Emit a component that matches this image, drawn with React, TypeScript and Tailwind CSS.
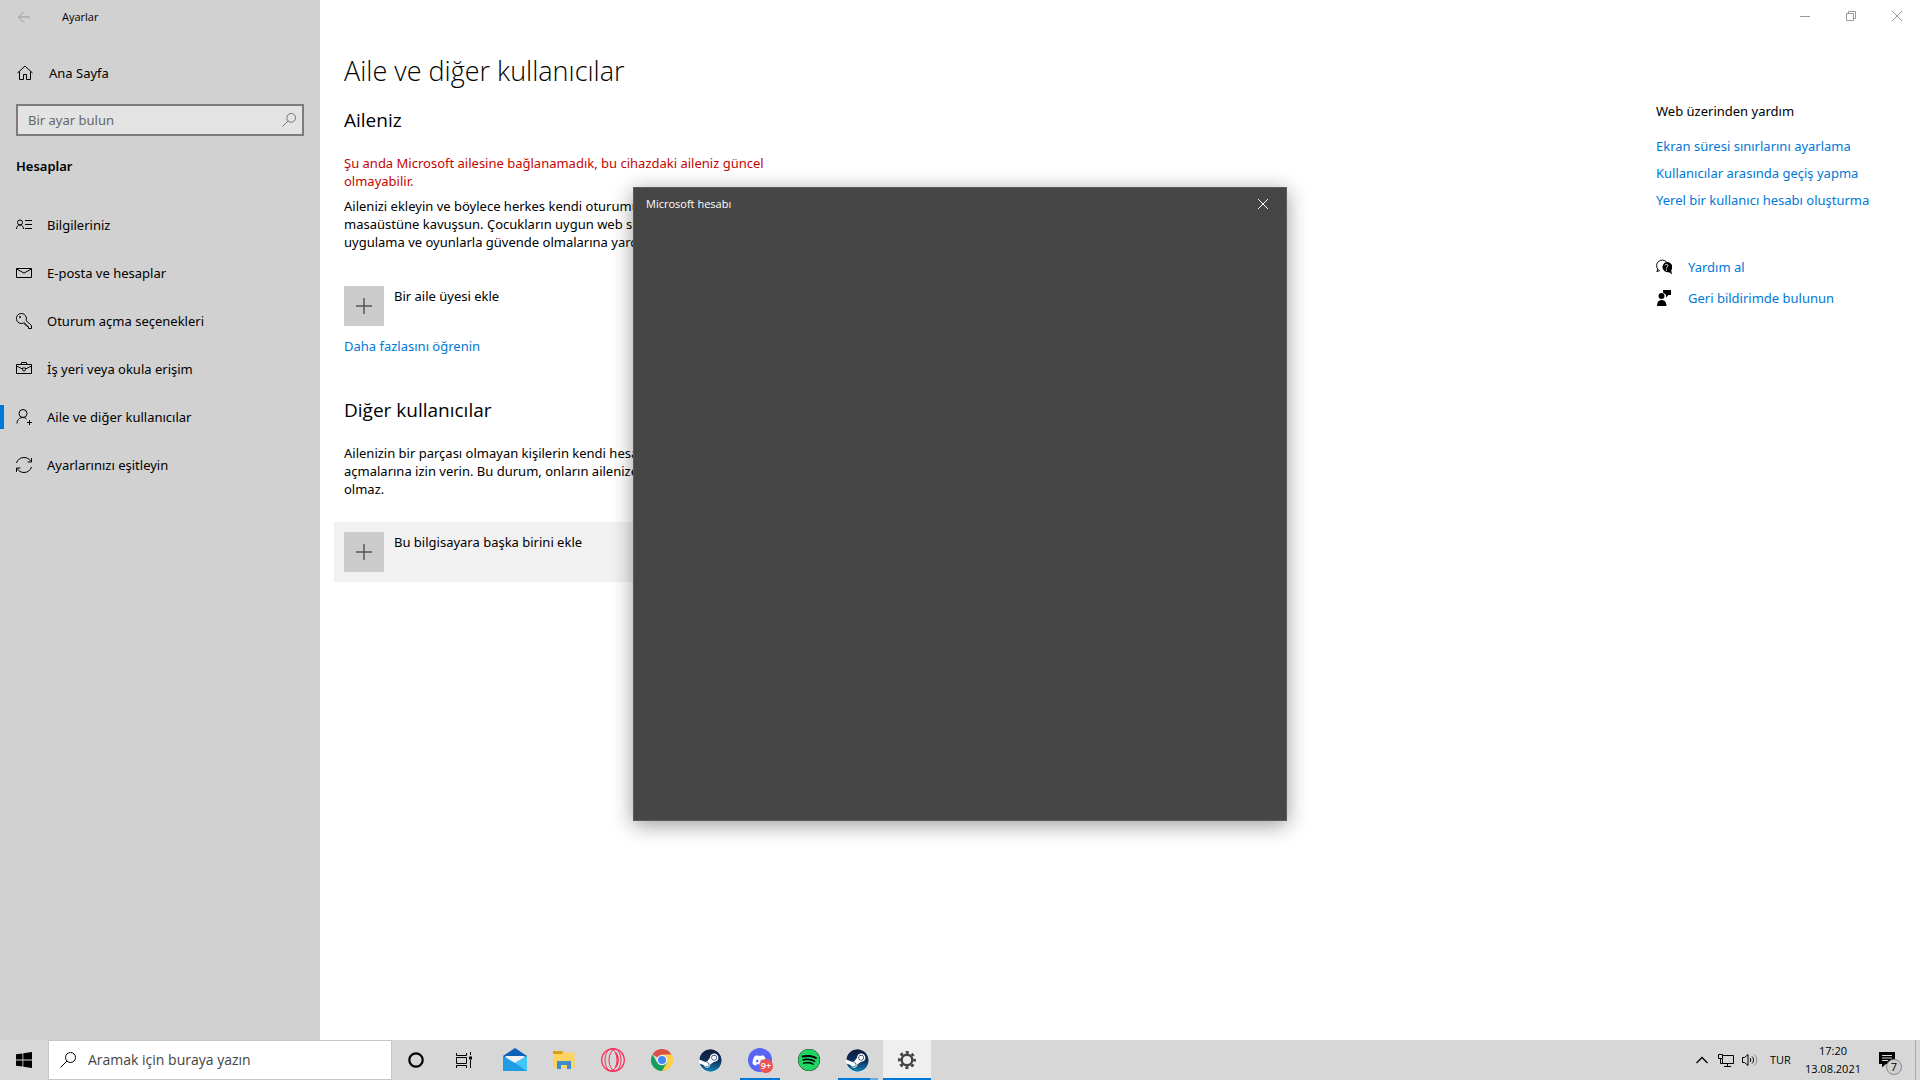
import type { ReactNode } from 'react';
import { FaDiscord, FaSpotify, FaSteam } from 'react-icons/fa';

const line = {
  width: 16,
  height: 16,
  viewBox: '0 0 16 16',
  fill: 'none',
  stroke: 'currentColor',
  strokeWidth: 1,
};

const navItems = [
  {
    label: 'Bilgileriniz',
    icon: (
      <svg {...line}>
        <circle cx="4" cy="5.500" r="2.500" />
        <path d="M.5 12c0-2.500 1.500-4 3.500-4s3.500 1.500 3.500 4M9 3.500h7M9 7.500h7M9 11.500h7" />
      </svg>
    ),
  },
  {
    label: 'E-posta ve hesaplar',
    icon: (
      <svg {...line}>
        <path d="M.5 3.500h15v9H.5zM.5 4l7.500 4 7.500-4" />
      </svg>
    ),
  },
  {
    label: 'Oturum açma seçenekleri',
    icon: (
      <svg {...line}>
        <path d="M5.500.5a5 5 0 1 0 2 9.500h1.500v2h2v1.500h1.500v2h3v-3L10 7.500A5 5 0 0 0 5.500.5z" />
        <circle cx="4" cy="4" r=".6" fill="currentColor" />
      </svg>
    ),
  },
  {
    label: 'İş yeri veya okula erişim',
    icon: (
      <svg {...line}>
        <path d="M.5 3.500h15v9H.5zM5.500 3.500v-2h5v2M.5 5l6 3M9.500 8l6-3" />
        <path d="M6.500 7h3v1.500a1.500 1.500 0 0 1-3 0z" />
      </svg>
    ),
  },
  {
    label: 'Aile ve diğer kullanıcılar',
    active: true,
    icon: (
      <svg {...line}>
        <circle cx="7" cy="4.500" r="4" />
        <path d="M1 14.500c0-3.500 2.500-6 6-6 1.500 0 2.500.5 3.500 1.500M13.500 11v5M11 13.500h5" />
      </svg>
    ),
  },
  {
    label: 'Ayarlarınızı eşitleyin',
    icon: (
      <svg {...line}>
        <path d="M.5 6C1.500 2.500 4.500.5 8 .5c3 0 5.500 1.500 7 4M15.500 1v4H11.500M15.500 10c-1 3.500-4 5.500-7.500 5.500-3 0-5.500-1.500-7-4M.5 15v-4h4" />
      </svg>
    ),
  },
];

const helpLinks = [
  'Ekran süresi sınırlarını ayarlama',
  'Kullanıcılar arasında geçiş yapma',
  'Yerel bir kullanıcı hesabı oluşturma',
];

function SearchIcon({ className }: { className: string }) {
  return (
    <svg viewBox="0 0 16 16" fill="none" stroke="currentColor" className={className}>
      <circle cx="10.500" cy="5.500" r="5" />
      <path d="M7 9 .5 15.500" />
    </svg>
  );
}

function CloseIcon() {
  return (
    <svg width="10" height="10" viewBox="0 0 10 10" fill="none" stroke="currentColor">
      <path d="m0 0 10 10M10 0 0 10" />
    </svg>
  );
}

function Sidebar() {
  return (
    <aside className="w-80 shrink-0 bg-[#d1d1d1]">
      <div className="flex h-[33px] items-center gap-8 pl-[18px]">
        <button aria-label="Geri" className="text-[#999]">
          <svg width="12" height="12" viewBox="0 0 12 12" fill="none" stroke="currentColor">
            <path d="M12 6H.5M6 .5.5 6 6 11.500" />
          </svg>
        </button>
        <span className="font-['Open_Sans',sans-serif] text-[11px]">Ayarlar</span>
      </div>
      <a href="#" className="mt-5 flex h-10 items-center gap-4 pl-[17px]">
        <svg {...line}>
          <path d="M.5 8 8 1l7.500 7M2.500 6.500v8h4v-5h3v5h4v-8" />
        </svg>
        Ana Sayfa
      </a>
      <div className="mx-4 mt-[11px] flex h-8 items-center border-2 border-[#7d7d7d] bg-[#e3e3e3] pr-1.5 pl-2.5">
        <input
          aria-label="Bir ayar bulun"
          placeholder="Bir ayar bulun"
          className="min-w-0 flex-1 bg-transparent outline-none placeholder:text-[#666]"
        />
        <SearchIcon className="size-3.5 text-[#666]" />
      </div>
      <h2 className="mt-5 pl-4 leading-5 font-semibold">Hesaplar</h2>
      <nav className="mt-[25px]">
        {navItems.map((item) => (
          <a key={item.label} href="#" className="relative flex h-12 items-center gap-[15px] pl-4">
            {item.active && <span className="absolute left-0 h-6 w-1 bg-[#0078d7]" />}
            {item.icon}
            {item.label}
          </a>
        ))}
      </nav>
    </aside>
  );
}

function AddTile() {
  return (
    <span className="flex size-10 items-center justify-center bg-[#ccc] text-[#555]">
      <svg width="16" height="16" viewBox="0 0 16 16" stroke="currentColor" strokeWidth="1.500">
        <path d="M8 0v16M0 8h16" />
      </svg>
    </span>
  );
}

function Content() {
  return (
    <main className="w-[480px] pt-[49px] pl-6">
      <h1 className="font-['Open_Sans',sans-serif] text-[27px] leading-11 font-light">Aile ve diğer kullanıcılar</h1>
      <h2 className="mt-[13px] font-['Open_Sans',sans-serif] text-[19px] leading-7">Aileniz</h2>
      <p className="mt-5 leading-[18px] whitespace-nowrap text-[#c50500]">
        Şu anda Microsoft ailesine bağlanamadık, bu cihazdaki aileniz güncel
        <br />
        olmayabilir.
      </p>
      <p className="mt-[7px] leading-[18px]">
        Ailenizi ekleyin ve böylece herkes kendi oturumu
        <br />
        masaüstüne kavuşsun. Çocukların uygun web siteleri
        <br />
        uygulama ve oyunlarla güvende olmalarına yardımcı
      </p>
      <button className="mt-[35px] flex gap-2.5 text-left">
        <AddTile />
        Bir aile üyesi ekle
      </button>
      <a href="#" className="mt-2.5 block leading-5 text-[#0078d7]">
        Daha fazlasını öğrenin
      </a>
      <h2 className="mt-10 font-['Open_Sans',sans-serif] text-[19px] leading-7">Diğer kullanıcılar</h2>
      <p className="mt-5 leading-[18px]">
        Ailenizin bir parçası olmayan kişilerin kendi hesap
        <br />
        açmalarına izin verin. Bu durum, onların ailenize
        <br />
        olmaz.
      </p>
      <button className="mt-6 -ml-2.5 flex w-full gap-2.5 bg-[#f1f1f1] p-2.5 text-left">
        <AddTile />
        Bu bilgisayara başka birini ekle
      </button>
    </main>
  );
}

function HelpPanel() {
  return (
    <aside className="ml-auto w-66 pt-[101px]">
      <h3 className="leading-5">Web üzerinden yardım</h3>
      <ul className="mt-3 text-[#0078d7]">
        {helpLinks.map((text) => (
          <li key={text} className="leading-[27px]">
            <a href="#">{text}</a>
          </li>
        ))}
      </ul>
      <div className="mt-[37px] text-[#0078d7]">
        <a href="#" className="flex h-[31px] items-center gap-4">
          <svg width="16" height="16" viewBox="0 0 16 16" className="text-black">
            <path d="M2 10.500A5 5 0 1 1 10.500 3M2 10 .8 12.500 4 11.500" fill="none" stroke="currentColor" />
            <path d="M10.500 3a5.200 5.200 0 1 0 2.500 10.200l3 2-.8-3.700A5.200 5.200 0 0 0 10.500 3z" fill="currentColor" />
            <path d="M9 6.500c.2-1.700 3-1.500 2.800.2C11.700 8 10.400 7.800 10.400 9.500M10.400 10.500v1.300" fill="none" stroke="#fff" />
          </svg>
          Yardım al
        </a>
        <a href="#" className="flex h-[31px] items-center gap-4">
          <svg width="16" height="16" viewBox="0 0 16 16" fill="currentColor" className="text-black">
            <circle cx="5.500" cy="6" r="3" />
            <path d="M1 16c0-4 1.500-6 4.500-6s5 2 5 6zM7 0h8v5h-2.500L10 7.500V5L9 4 7 2.500z" />
          </svg>
          Geri bildirimde bulunun
        </a>
      </div>
    </aside>
  );
}

function WindowButtons() {
  return (
    <div className="absolute top-0 right-0 flex text-[#999]">
      <button aria-label="Küçült" className="flex h-8 w-[46px] items-center justify-center">
        <svg width="10" height="10" viewBox="0 0 10 10" stroke="currentColor">
          <path d="M0 5.500h10" />
        </svg>
      </button>
      <button aria-label="Geri yükle" className="flex h-8 w-[46px] items-center justify-center">
        <svg width="10" height="10" viewBox="0 0 10 10" fill="none" stroke="currentColor">
          <path d="M.5 2.500h7v7h-7zM2.500 2.500v-2h7v7h-2" />
        </svg>
      </button>
      <button aria-label="Kapat" className="flex h-8 w-[46px] items-center justify-center">
        <CloseIcon />
      </button>
    </div>
  );
}

function AccountDialog() {
  return (
    <div
      role="dialog"
      aria-label="Microsoft hesabı"
      className="absolute top-[187px] left-1/2 h-[634px] w-[654px] -translate-x-1/2 border border-[#5c5c5c] bg-[#464646] text-white shadow-[0_4px_20px_rgba(0,0,0,0.4)]"
    >
      <div className="flex h-8 items-center justify-between pl-3">
        <span className="font-['Open_Sans',sans-serif] text-[11px]">Microsoft hesabı</span>
        <button aria-label="Kapat" className="flex h-8 w-[46px] items-center justify-center">
          <CloseIcon />
        </button>
      </div>
    </div>
  );
}

function SteamIcon() {
  return (
    <span className="rounded-full bg-white">
      <svg width="0" height="0" className="absolute">
        <linearGradient id="steam" x1="0" y1="0" x2="0" y2="1">
          <stop offset="0" stopColor="#121a3c" />
          <stop offset="0.500" stopColor="#0f2f5c" />
          <stop offset="1" stopColor="#1583b5" />
        </linearGradient>
      </svg>
      <FaSteam size={23} fill="url(#steam)" />
    </span>
  );
}

function TaskButton({ label, children }: { label: string; children: ReactNode }) {
  return (
    <button aria-label={label} className="relative flex h-10 w-[49px] items-center justify-center">
      {children}
    </button>
  );
}

function Taskbar() {
  return (
    <footer className="flex h-10 bg-[#d7d7d7] font-['Open_Sans',sans-serif]">
      <button aria-label="Başlat" className="flex w-12 items-center justify-center">
        <svg width="16" height="16" viewBox="0 0 16 16">
          <path d="M0 2.300 6.500 1.400v6.200H0zM7.300 1.300 16 0v7.600H7.300zM0 8.400h6.500v6.200L0 13.700zM7.300 8.400H16V16l-8.700-1.300z" />
        </svg>
      </button>
      <label className="flex w-86 items-center gap-3 border border-[#c6c6c6] bg-white pl-[11px]">
        <SearchIcon className="size-4 text-black" />
        <input
          aria-label="Aramak için buraya yazın"
          placeholder="Aramak için buraya yazın"
          className="min-w-0 flex-1 text-sm outline-none placeholder:text-[#444]"
        />
      </label>
      <button aria-label="Cortana" className="flex w-12 items-center justify-center">
        <svg width="16" height="16" viewBox="0 0 16 16" fill="none" stroke="#000" strokeWidth="2.200">
          <circle cx="8" cy="8" r="6.700" />
        </svg>
      </button>
      <button aria-label="Görev Görünümü" className="mr-0.5 flex w-12 items-center justify-center">
        <svg width="16" height="16" viewBox="0 0 16 16" fill="none" stroke="#000">
          <path d="M.5 1v2.500h10V1M.5 5.500h10v6H.5zM.5 16v-2.500h10V16M14.500 0v3M14.500 8v8" />
          <path d="M13 4.500h3v3h-3z" fill="#000" stroke="none" />
        </svg>
      </button>
      <TaskButton label="Posta">
        <svg width="24" height="24" viewBox="0 0 24 24">
          <path d="M0 8 12 0l12 8v3H0z" fill="#0b62b8" />
          <path d="M2.500 8h19v6L12 17l-9.500-3z" fill="#f2f2f2" />
          <path d="M0 8l12 7 12-7v15H0z" fill="#1f9ce4" />
          <path d="M24 8 12 15l12 8z" fill="#35b8f1" />
          <path d="M12 15 24 8v15z" fill="#50d0f8" opacity=".6" />
        </svg>
      </TaskButton>
      <TaskButton label="Dosya Gezgini">
        <svg width="22" height="20" viewBox="0 0 22 20">
          <path d="M0 1h9.500l1.500 1.500h10.500V18H0z" fill="#fdd362" />
          <path d="M0 1h9.500v3H0z" fill="#dd9d13" />
          <path d="M4 19v-8h14v8h-4v-4H8v4z" fill="#3f8ccb" />
        </svg>
      </TaskButton>
      <TaskButton label="Opera GX">
        <svg width="24" height="24" viewBox="0 0 24 24" fill="none" stroke="#fa2e5b">
          <circle cx="12" cy="12" r="11.300" strokeWidth="1.300" />
          <ellipse cx="10" cy="12" rx="6" ry="10.800" />
          <ellipse cx="14" cy="12" rx="6" ry="10.800" />
          <path d="M14.500 4.500c3.500 4 3.500 11 0 15" strokeWidth="1.500" />
        </svg>
      </TaskButton>
      <TaskButton label="Chrome">
        <svg width="22" height="22" viewBox="0 0 24 24">
          <path d="M12 12 1.600 6A12 12 0 0 1 22.400 6z" fill="#dd4f43" />
          <path d="M12 6h10.400A12 12 0 0 1 12 24l5.200-9z" fill="#ffcf48" />
          <path d="M1.600 6A12 12 0 0 0 12 24l5.200-9H12L6.800 15z" fill="#169d5b" />
          <circle cx="12" cy="12" r="5.800" fill="#f1f1f1" />
          <circle cx="12" cy="12" r="4.400" fill="#4688f2" />
        </svg>
      </TaskButton>
      <TaskButton label="Steam">
        <SteamIcon />
      </TaskButton>
      <TaskButton label="Discord">
        <span className="flex size-6 items-center justify-center rounded-full bg-[#5865f2] text-white">
          <FaDiscord size={15} />
        </span>
        <span className="absolute top-[19px] left-6 size-3.5 rounded-full bg-[#ee5253] text-center text-[9px] leading-3.5 font-semibold text-white">
          9+
        </span>
        <span className="absolute bottom-0 h-0.5 w-10 bg-[#0078d7]" />
      </TaskButton>
      <TaskButton label="Spotify">
        <span className="rounded-full bg-black">
          <FaSpotify size={22} className="text-[#1ed760]" />
        </span>
      </TaskButton>
      <TaskButton label="Steam">
        <SteamIcon />
        <span className="absolute bottom-0 h-0.5 w-10 bg-linear-to-r from-[#0078d7] from-80% to-[#60aae6] to-80%" />
      </TaskButton>
      <button aria-label="Ayarlar" className="relative ml-px flex w-12 items-center justify-center bg-[#efefef]">
        <svg width="18" height="18" viewBox="0 0 18 18" fill="none" stroke="#444">
          <circle cx="9" cy="9" r="5.300" strokeWidth="2.400" />
          <circle cx="9" cy="9" r="7.600" strokeWidth="2.800" strokeDasharray="3 2.969" strokeDashoffset="1.500" />
        </svg>
        <span className="absolute bottom-0 h-0.5 w-12 bg-[#0078d7]" />
      </button>
      <div className="ml-auto flex items-center text-[11px]">
        <button aria-label="Gizli simgeler" className="mr-2.5">
          <svg width="12" height="8" viewBox="0 0 12 8" fill="none" stroke="#000" strokeWidth="1.300">
            <path d="m.5 7 5.500-5.500L11.500 7" />
          </svg>
        </button>
        <svg {...line} className="mr-2">
          <path d="M5 3.500h10.500v8h-11V7M9.500 11.500v3M6 14.500h7M.5 2.500h4v4h-4zM2.500 6.500v5h2" />
        </svg>
        <svg {...line}>
          <path d="M.5 5.500h2L6 2.500v11l-3.500-3h-2zM8 6c1 1 1 3 0 4M10 4.500c2 2 2 5 0 7" />
          <path d="M12.500 2.500c3 3 3 8 0 11" stroke="#888" />
        </svg>
        <span className="ml-3">TUR</span>
        <time className="ml-3.5 text-center leading-[18px]">
          17:20
          <br />
          13.08.2021
        </time>
        <button aria-label="Bildirimler" className="relative mr-5 ml-[18px]">
          <svg width="16" height="16" viewBox="0 0 16 16">
            <path d="M0 0h16v12H7l-4 3.500V12H0z" />
            <path d="M3 3.500h10M3 6h10M3 8.500h6" stroke="#d7d7d7" />
          </svg>
          <span className="absolute top-[7px] left-[7px] size-4 rounded-full border border-[#888] bg-[#d0d0d0] text-center leading-3.5">
            7
          </span>
        </button>
        <span className="h-10 w-[5px] border-l border-[#aaa]" />
      </div>
    </footer>
  );
}

export default function App() {
  return (
    <div className="relative flex min-h-screen flex-col overflow-hidden bg-white font-['Noto_Sans',sans-serif] text-[13px] leading-5 text-black">
      <div className="relative flex flex-1">
        <Sidebar />
        <Content />
        <HelpPanel />
        <WindowButtons />
      </div>
      <Taskbar />
      <AccountDialog />
    </div>
  );
}
